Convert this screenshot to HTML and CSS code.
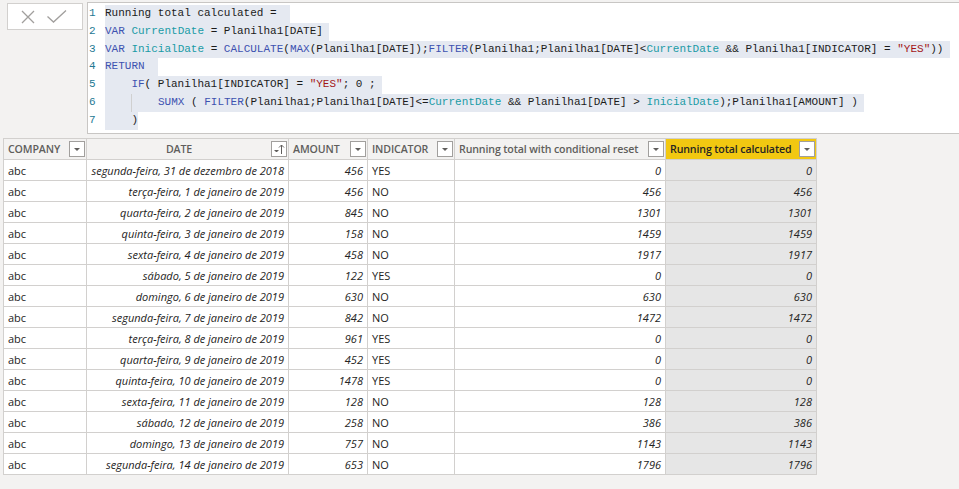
FILE: index.html
```html
<!DOCTYPE html>
<html lang="pt">
<head>
<meta charset="utf-8">
<title>Running total calculated</title>
<link rel="stylesheet" href="styles.css">
</head>
<body>
<div class="top">
  <div class="actions">
    <svg class="ico" width="16" height="16" viewBox="0 0 16 16"><path d="M2 2 L14 14 M14 2 L2 14" stroke="#a19f9d" stroke-width="1.3" fill="none"/></svg>
    <svg class="ico" width="22" height="16" viewBox="0 0 22 16"><path d="M1.5 7.5 L7.5 13 L20 1.5" stroke="#a19f9d" stroke-width="1.3" fill="none"/></svg>
  </div>
  <div class="editor">
    <div class="line"><span class="num">1</span><span class="code">Running total calculated = </span></div>
    <div class="line"><span class="num">2</span><span class="code"><span class="k">VAR</span> <span class="v">CurrentDate</span> = Planilha1[DATE]</span></div>
    <div class="line"><span class="num">3</span><span class="code"><span class="k">VAR</span> <span class="v">InicialDate</span> = <span class="k">CALCULATE</span>(<span class="k">MAX</span>(Planilha1[DATE]);<span class="k">FILTER</span>(Planilha1;Planilha1[DATE]&lt;<span class="v">CurrentDate</span> &amp;&amp; Planilha1[INDICATOR] = <span class="s">"YES"</span>))</span></div>
    <div class="line"><span class="num">4</span><span class="code"><span class="k">RETURN</span> </span></div>
    <div class="line"><span class="num">5</span><span class="code">    <span class="k">IF</span>( Planilha1[INDICATOR] = <span class="s">"YES"</span>; 0 ;</span></div>
    <div class="line"><span class="num">6</span><span class="code"><span class="guide">    </span>    <span class="k">SUMX</span> ( <span class="k">FILTER</span>(Planilha1;Planilha1[DATE]&lt;=<span class="v">CurrentDate</span> &amp;&amp; Planilha1[DATE] &gt; <span class="v">InicialDate</span>);Planilha1[AMOUNT] )</span></div>
    <div class="line"><span class="num">7</span><span class="code last">    )</span></div>
  </div>
</div>

<div class="grid">
  <div class="hd"><span class="lbl">COMPANY</span><span class="fbtn"><span class="tri"></span></span></div>
  <div class="hd"><span class="lbl center">DATE</span><span class="fbtn"><svg width="14" height="14" viewBox="0 0 14 14"><path d="M2.5 8.5 H6.5" stroke="#605e5c" stroke-width="1"/><path d="M3.5 9.5 H5.5" stroke="#605e5c" stroke-width="1"/><path d="M9.5 12 V3 M7 5.5 L9.5 3 L12 5.5" stroke="#605e5c" stroke-width="1" fill="none"/></svg></span></div>
  <div class="hd"><span class="lbl">AMOUNT</span><span class="fbtn"><span class="tri"></span></span></div>
  <div class="hd"><span class="lbl">INDICATOR</span><span class="fbtn"><span class="tri"></span></span></div>
  <div class="hd"><span class="lbl">Running total with conditional reset</span><span class="fbtn"><span class="tri"></span></span></div>
  <div class="hd sel"><span class="lbl">Running total calculated</span><span class="fbtn"><span class="tri"></span></span></div>

  <div class="c">abc</div><div class="c r i">segunda-feira, 31 de dezembro de 2018</div><div class="c r i">456</div><div class="c">YES</div><div class="c r i">0</div><div class="c r i g">0</div>
  <div class="c">abc</div><div class="c r i">terça-feira, 1 de janeiro de 2019</div><div class="c r i">456</div><div class="c">NO</div><div class="c r i">456</div><div class="c r i g">456</div>
  <div class="c">abc</div><div class="c r i">quarta-feira, 2 de janeiro de 2019</div><div class="c r i">845</div><div class="c">NO</div><div class="c r i">1301</div><div class="c r i g">1301</div>
  <div class="c">abc</div><div class="c r i">quinta-feira, 3 de janeiro de 2019</div><div class="c r i">158</div><div class="c">NO</div><div class="c r i">1459</div><div class="c r i g">1459</div>
  <div class="c">abc</div><div class="c r i">sexta-feira, 4 de janeiro de 2019</div><div class="c r i">458</div><div class="c">NO</div><div class="c r i">1917</div><div class="c r i g">1917</div>
  <div class="c">abc</div><div class="c r i">sábado, 5 de janeiro de 2019</div><div class="c r i">122</div><div class="c">YES</div><div class="c r i">0</div><div class="c r i g">0</div>
  <div class="c">abc</div><div class="c r i">domingo, 6 de janeiro de 2019</div><div class="c r i">630</div><div class="c">NO</div><div class="c r i">630</div><div class="c r i g">630</div>
  <div class="c">abc</div><div class="c r i">segunda-feira, 7 de janeiro de 2019</div><div class="c r i">842</div><div class="c">NO</div><div class="c r i">1472</div><div class="c r i g">1472</div>
  <div class="c">abc</div><div class="c r i">terça-feira, 8 de janeiro de 2019</div><div class="c r i">961</div><div class="c">YES</div><div class="c r i">0</div><div class="c r i g">0</div>
  <div class="c">abc</div><div class="c r i">quarta-feira, 9 de janeiro de 2019</div><div class="c r i">452</div><div class="c">YES</div><div class="c r i">0</div><div class="c r i g">0</div>
  <div class="c">abc</div><div class="c r i">quinta-feira, 10 de janeiro de 2019</div><div class="c r i">1478</div><div class="c">YES</div><div class="c r i">0</div><div class="c r i g">0</div>
  <div class="c">abc</div><div class="c r i">sexta-feira, 11 de janeiro de 2019</div><div class="c r i">128</div><div class="c">NO</div><div class="c r i">128</div><div class="c r i g">128</div>
  <div class="c">abc</div><div class="c r i">sábado, 12 de janeiro de 2019</div><div class="c r i">258</div><div class="c">NO</div><div class="c r i">386</div><div class="c r i g">386</div>
  <div class="c">abc</div><div class="c r i">domingo, 13 de janeiro de 2019</div><div class="c r i">757</div><div class="c">NO</div><div class="c r i">1143</div><div class="c r i g">1143</div>
  <div class="c">abc</div><div class="c r i">segunda-feira, 14 de janeiro de 2019</div><div class="c r i">653</div><div class="c">NO</div><div class="c r i">1796</div><div class="c r i g">1796</div>
</div>
</body>
</html>
```

FILE: styles.css
```css
html, body {
  margin: 0;
  padding: 0;
  background: #f3f2f1;
  overflow: hidden;
}
body {
  font-family: "Open Sans", "Noto Sans", sans-serif;
  font-size: 11px;
  color: #252423;
}
.top {
  display: flex;
  align-items: flex-start;
  height: 136px;
}
.actions {
  box-sizing: border-box;
  margin: 3px 0 0 7px;
  width: 76px;
  height: 27px;
  background: #fff;
  border: 1px solid #d2d0ce;
  display: flex;
  align-items: center;
  padding: 0 0 0 12px;
  gap: 10px;
}
.ico { display: block; }
.editor {
  box-sizing: border-box;
  margin: 2px -4px 0 4px;
  flex: 1;
  height: 132px;
  background: #fff;
  border: 1px solid #c8c6c4;
  padding-top: 2px;
  font-family: "Liberation Mono", "DejaVu Sans Mono", monospace;
  font-size: 11px;
  color: #1b1b1b;
  overflow: hidden;
}
.line {
  display: flex;
  height: 17.8px;
  line-height: 17.8px;
  white-space: pre;
}
.num {
  width: 16px;
  padding-left: 1px;
  color: #237893;
  flex: none;
}
.code {
  background: #e5e9f1;
  padding-right: 6.6px;
}
.code.last { padding-right: 0; }
.k { color: #3d52b0; }
.v { color: #1a9ba6; }
.s { color: #a31515; }
.guide {
  display: inline-block;
  box-shadow: inset -1px 0 0 #d0d0d0;
  width: 26.6px;
}

.grid {
  display: grid;
  grid-template-columns: 83px 202px 79px 87px 211px 151px;
  grid-auto-rows: 21px;
  width: max-content;
  margin: 2px 0 0 3px;
  border-left: 1px solid #d2d0ce;
  border-top: 1px solid #d2d0ce;
}
.hd, .c {
  box-sizing: border-box;
  border-right: 1px solid #d2d0ce;
  border-bottom: 1px solid #d2d0ce;
  display: flex;
  align-items: center;
  white-space: nowrap;
  overflow: hidden;
}
.hd {
  background: #f3f2f1;
  color: #605e5c;
  font-weight: 600;
  font-size: 10.6px;
  letter-spacing: -0.12px;
  padding: 0 1px 0 4px;
  gap: 4px;
}
.hd .lbl { flex: 1; }
.hd .lbl.center { text-align: center; }
.hd.sel {
  background: #f2c811;
  color: #252423;
}
.fbtn {
  box-sizing: border-box;
  width: 16px;
  height: 16px;
  flex: none;
  background: #fff;
  border: 1px solid #a19f9d;
  display: flex;
  align-items: center;
  justify-content: center;
}
.tri {
  width: 0;
  height: 0;
  border-left: 3px solid transparent;
  border-right: 3px solid transparent;
  border-top: 3px solid #605e5c;
}
.c {
  background: #fff;
  padding: 0 4px;
}
.c.r { justify-content: flex-end; }
.c.i { font-style: italic; }
.c.g { background: #e6e6e6; }
```
